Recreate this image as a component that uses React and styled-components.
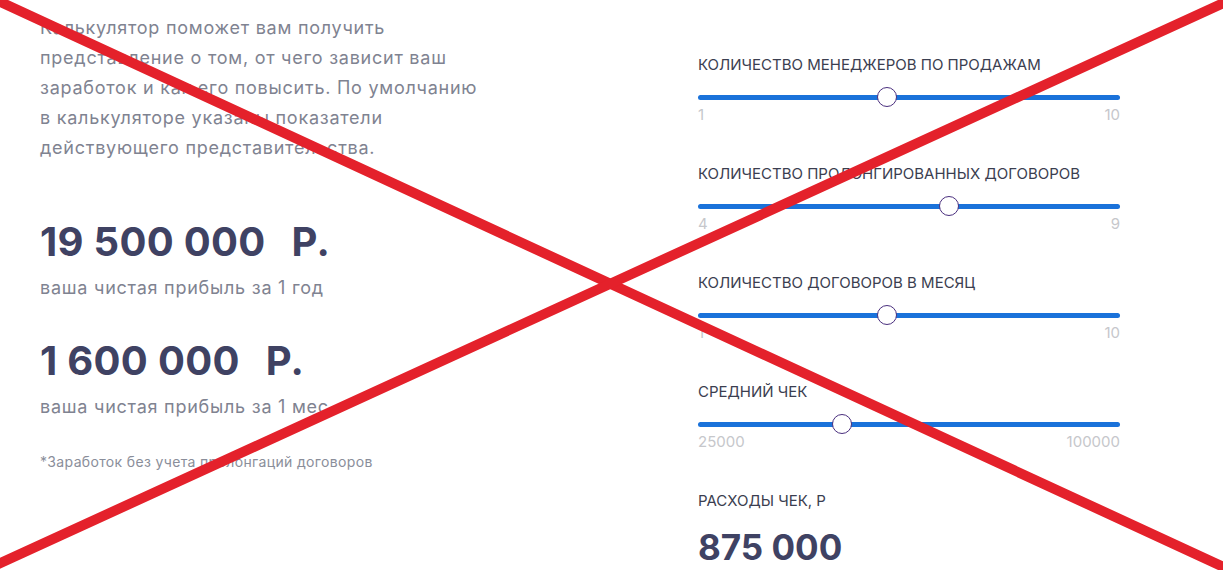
import React from "react";
import styled, { createGlobalStyle } from "styled-components";

const GlobalStyle = createGlobalStyle`
    body {
        margin: 0;
        background: #ffffff;
        font-family: Inter, "Noto Sans", "Liberation Sans", sans-serif;
    }
`;

const sliders = [
    { label: "Количество менеджеров по продажам", min: 1, max: 10, value: 5 },
    { label: "Количество пролонгированных договоров", min: 4, max: 9, value: 7 },
    { label: "Количество договоров в месяц", min: 1, max: 10, value: 5 },
    { label: "Средний чек", min: 25000, max: 100000, value: 50000, step: 1000 },
];

export default function App() {
    return (
        <Page>
            <GlobalStyle />
            <Calculator>
                <Summary>
                    <Intro>
                        Калькулятор поможет вам получить представление о том, от чего
                        зависит ваш заработок и как его повысить. По умолчанию в
                        калькуляторе указаны показатели действующего представительства.
                    </Intro>
                    <Amount>
                        19 500 000<Currency>Р.</Currency>
                    </Amount>
                    <Caption>ваша чистая прибыль за 1 год</Caption>
                    <Amount $spaced>
                        1 600 000<Currency>Р.</Currency>
                    </Amount>
                    <Caption>ваша чистая прибыль за 1 мес</Caption>
                    <Note>*Заработок без учета пролонгаций договоров</Note>
                </Summary>

                <Controls>
                    {sliders.map((s) => (
                        <Field key={s.label}>
                            <Label>{s.label}</Label>
                            <Range
                                type="range"
                                min={s.min}
                                max={s.max}
                                step={s.step || 1}
                                defaultValue={s.value}
                            />
                            <Limits>
                                <span>{s.min}</span>
                                <span>{s.max}</span>
                            </Limits>
                        </Field>
                    ))}
                    <Field>
                        <Label>Расходы чек, Р</Label>
                        <Expense>875 000</Expense>
                    </Field>
                </Controls>
            </Calculator>

            <Cross viewBox="0 0 1223 570" preserveAspectRatio="none">
                <line x1="-6" y1="-1" x2="1230" y2="570" />
                <line x1="-6" y1="566" x2="1230" y2="0" />
            </Cross>
        </Page>
    );
}

const Page = styled.div`
    position: relative;
    width: 1223px;
    height: 570px;
    overflow: hidden;
`;

const Calculator = styled.div`
    display: grid;
    grid-template-columns: 458px 422px;
    column-gap: 200px;
    padding-left: 40px;
`;

const Summary = styled.div`
    display: flex;
    flex-direction: column;
    padding-top: 13px;
`;

const Intro = styled.p`
    max-width: 450px;
    margin: 0;
    font-size: 18px;
    line-height: 30px;
    letter-spacing: 0.75px;
    color: #7f8391;
`;

const Amount = styled.div`
    margin-top: ${(p) => (p.$spaced ? "34px" : "55px")};
    font-size: 40px;
    line-height: 48px;
    font-weight: 700;
    letter-spacing: 0.3px;
    color: #3f4263;
`;

const Currency = styled.span`
    margin-left: 26px;
`;

const Caption = styled.div`
    margin-top: 7px;
    font-size: 18px;
    line-height: 30px;
    letter-spacing: 0.75px;
    color: #7f8391;
`;

const Note = styled.div`
    margin-top: 30px;
    font-size: 14px;
    line-height: 20px;
    letter-spacing: 0.35px;
    color: #8a8e9a;
`;

const Controls = styled.div`
    display: flex;
    flex-direction: column;
    gap: 39px;
    padding-top: 55px;
`;

const Field = styled.div`
    display: flex;
    flex-direction: column;
`;

const Label = styled.div`
    font-size: 15px;
    line-height: 20px;
    text-transform: uppercase;
    color: #3b3e50;
`;

const Range = styled.input`
    -webkit-appearance: none;
    appearance: none;
    width: 100%;
    height: 16px;
    margin: 14px 0 0;
    padding: 0;
    background: transparent;

    &::-webkit-slider-runnable-track {
        height: 5px;
        border-radius: 3px;
        background: #1a72da;
    }

    &::-webkit-slider-thumb {
        -webkit-appearance: none;
        width: 20px;
        height: 20px;
        margin-top: -7.5px;
        box-sizing: border-box;
        border-radius: 50%;
        border: 1.5px solid #4a2f7e;
        background: #ffffff;
    }

    &::-moz-range-track {
        height: 5px;
        border-radius: 3px;
        background: #1a72da;
    }

    &::-moz-range-thumb {
        width: 20px;
        height: 20px;
        box-sizing: border-box;
        border-radius: 50%;
        border: 1.5px solid #4a2f7e;
        background: #ffffff;
    }
`;

const Limits = styled.div`
    display: flex;
    justify-content: space-between;
    font-size: 15px;
    line-height: 20px;
    color: #c6c7cb;
`;

const Expense = styled.div`
    margin-top: 15px;
    font-size: 35px;
    line-height: 42px;
    font-weight: 700;
    color: #3f4263;
`;

const Cross = styled.svg`
    position: absolute;
    inset: 0;
    width: 100%;
    height: 100%;
    pointer-events: none;

    line {
        stroke: #e4212b;
        stroke-width: 10;
        stroke-linecap: round;
    }
`;
